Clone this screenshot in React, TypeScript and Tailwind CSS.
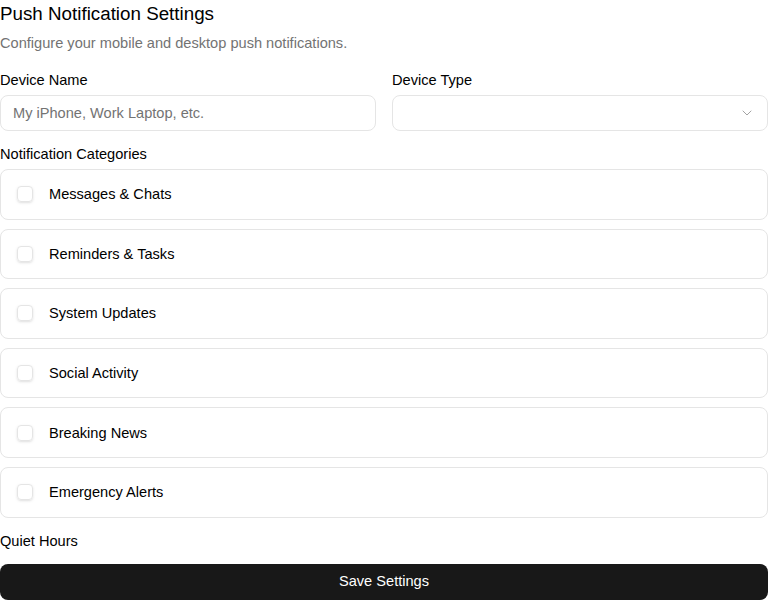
import { ChevronDown } from "lucide-react";

const categories = [
    "Messages & Chats",
    "Reminders & Tasks",
    "System Updates",
    "Social Activity",
    "Breaking News",
    "Emergency Alerts",
];

function App() {
    return (
        <div className="w-[768px] h-[600px] overflow-hidden bg-white text-black font-['Liberation_Sans',Arial,sans-serif] flex flex-col">
            <h1 className="text-[18.8px] leading-[28px]">Push Notification Settings</h1>
            <p className="mt-[5px] text-[14.6px] leading-[20px] text-[#737373]">
                Configure your mobile and desktop push notifications.
            </p>

            <div className="mt-[17px] grid grid-cols-2 gap-4">
                <div className="flex flex-col">
                    <label className="text-[14.6px] leading-[20px]">Device Name</label>
                    <input
                        placeholder="My iPhone, Work Laptop, etc."
                        className="mt-[5px] h-[36px] rounded-[8px] border border-[#e5e5e5] px-3 text-[14.6px] placeholder:text-[#737373] outline-none"
                    />
                </div>
                <div className="flex flex-col">
                    <label className="text-[14.6px] leading-[20px]">Device Type</label>
                    <button className="mt-[5px] h-[36px] rounded-[8px] border border-[#e5e5e5] px-3 flex items-center justify-end">
                        <ChevronDown size={16} strokeWidth={1.5} className="text-[#a3a3a3]" />
                    </button>
                </div>
            </div>

            <p className="mt-[13px] text-[14.6px] leading-[20px]">Notification Categories</p>
            <div className="mt-[5px] flex flex-col gap-[9px]">
                {categories.map((c) => (
                    <div
                        key={c}
                        className="h-[50.6px] rounded-[8px] border border-[#e5e5e5] px-4 flex items-center gap-4"
                    >
                        <span className="w-4 h-4 rounded-[4px] border border-[#e5e5e5] shadow-sm" />
                        <span className="text-[14.6px] leading-[20px]">{c}</span>
                    </div>
                ))}
            </div>

            <p className="mt-[13px] text-[14.6px] leading-[20px]">Quiet Hours</p>
            <button className="mt-[13px] h-[36px] rounded-[8px] bg-[#181818] text-white text-[14.6px] flex items-center justify-center">
                Save Settings
            </button>
        </div>
    );
}

export default App;
